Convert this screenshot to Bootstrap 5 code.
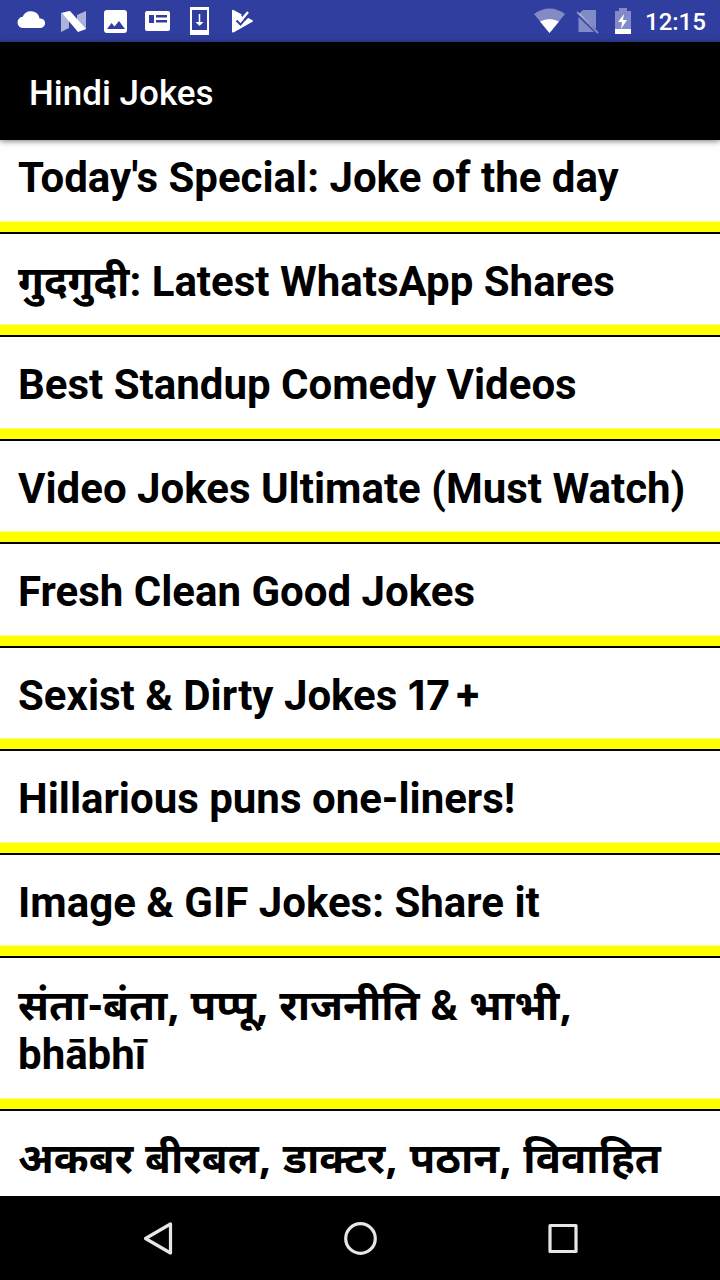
<!DOCTYPE html>
<html lang="hi">
<head>
<meta charset="utf-8">
<meta name="viewport" content="width=device-width, initial-scale=1">
<title>Hindi Jokes</title>
<link href="https://cdn.jsdelivr.net/npm/bootstrap@5.3.0/dist/css/bootstrap.min.css" rel="stylesheet">
<style>
body{height:1280px;font-family:Roboto,"Noto Sans Devanagari","Noto Sans",sans-serif;background:#fff;color:#000}
.status-bar{height:42px;background:#303f9f}
.status-bar svg{display:block}
.clock{font-size:24px;font-weight:500;line-height:44px;height:42px;width:63px}
.app-bar{height:98px;padding-left:29px;box-shadow:0 1px 6px rgba(0,0,0,.55);z-index:1}
.app-title{font-size:35px;font-weight:500;line-height:40px;padding-top:6px}
.jokes{min-height:0}
.jokes .list-group-item{flex:none;height:103.43px;padding:23px 18px 0;border:0;border-bottom:2px solid #000;box-shadow:inset 0 -10.5px #ff0;color:#000;font-size:42px;line-height:49px;font-weight:700;white-space:nowrap}
.jokes .list-group-item:first-child{height:94px;padding-top:13px}
.jokes .two-line{height:153px}
.jokes .hindi{font-family:"Noto Sans Devanagari","Noto Sans",sans-serif;line-height:40px}
.amp{font-family:Roboto,sans-serif}
.num{font-family:Inter,sans-serif;font-size:41px;line-height:1;letter-spacing:.5px;margin-right:6px}
.nav-keys{height:84px}
</style>
</head>
<body class="d-flex flex-column overflow-hidden">
<header class="status-bar flex-shrink-0">
<div class="d-flex">
<svg width="645" height="42" viewBox="0 0 645 42" fill="#fff" class="flex-shrink-0">
<path d="M23.500 28a5.600 5.600 0 0 1-.8-11.200A8.800 8.800 0 0 1 39.500 18.500 4.800 4.800 0 0 1 41 28z"/>
<path d="M61 13l8-2v17l-8 4zM77 15l9-4v18l-9 2z" opacity=".6"/><path d="M62 13l8-2 16 18-8 3z"/>
<path fill-rule="evenodd" d="M107 10h17a3 3 0 0 1 3 3v17a3 3 0 0 1-3 3h-17a3 3 0 0 1-3-3V13a3 3 0 0 1 3-3zm0 19h18l-6-8-4.500 5.500-3-3.500z"/>
<path fill-rule="evenodd" d="M147 11h21a2 2 0 0 1 2 2v16a2 2 0 0 1-2 2h-21a2 2 0 0 1-2-2V13a2 2 0 0 1 2-2zm2 4v8h5v-8zm7 0v2.500h11V15zm0 5v2.500h11V20z"/>
<path fill-rule="evenodd" d="M190 7h19v28h-19zm2 3v20h15V10z"/><path d="M199.500 14v10" fill="none" stroke="#fff" stroke-width="1.500"/><path d="M195.500 22h8l-4 4z"/>
<path d="M233.500 10l18.500 10q2 1 0 2l-18.500 10.500q-1.500.4-1.500-1V11q0-1.800 1.500-1z"/><path d="M236.500 20.500l4 4 8.500-10" fill="none" stroke="#303f9f" stroke-width="2"/><path d="M241 15l9-5v6l-5 5z" fill="#303f9f"/><path d="M237 16.500l3.500 4.500 7.500-9" fill="none" stroke="#fff" stroke-width="2.400"/>
<path d="M534 14q15.500-11 31 0l-15.500 19z" opacity=".4"/><path d="M540 21.500q9.500-5 19 0L549.500 33z"/>
<path d="M583 10h13v19l-17.500-15zM578.500 17L594 32h-15.500z" opacity=".4"/><path d="M577 12l21 21" stroke="#fff" stroke-width="1.800" opacity=".4"/>
<path d="M615 11h4V8h8v3h4v19h-16z" opacity=".4"/><path d="M615 29h16v5h-16zM624 14l-6 8h4l-1 7 6-9h-4z"/>
</svg>
<div class="clock text-white text-nowrap flex-shrink-0">12:15</div>
</div>
</header>
<nav class="app-bar bg-black d-flex align-items-center flex-shrink-0 position-relative">
<h1 class="app-title text-white mb-0">Hindi Jokes</h1>
</nav>
<main class="jokes list-group list-group-flush flex-grow-1 overflow-hidden">
<div class="list-group-item">Today's Special: Joke of the day</div>
<div class="list-group-item">गुदगुदी: Latest WhatsApp Shares</div>
<div class="list-group-item">Best Standup Comedy Videos</div>
<div class="list-group-item">Video Jokes Ultimate (Must Watch)</div>
<div class="list-group-item">Fresh Clean Good Jokes</div>
<div class="list-group-item">Sexist &amp; Dirty Jokes <span class="num">17</span>+</div>
<div class="list-group-item">Hillarious puns one-liners!</div>
<div class="list-group-item">Image &amp; GIF Jokes: Share it</div>
<div class="list-group-item two-line"><span class="hindi">संता-बंता, पप्पू, राजनीति <span class="amp">&amp;</span> भाभी,</span><br>bhābhī</div>
<div class="list-group-item"><span class="hindi" style="word-spacing:.9px">अकबर बीरबल, डाक्टर, पठान, विवाहित</span></div>
</main>
<footer class="nav-keys bg-black flex-shrink-0">
<svg width="720" height="84" viewBox="0 0 720 84" fill="none" stroke="#e6e6e6" stroke-width="3.200" stroke-linejoin="round" class="d-block">
<path d="M145.500 42.500L170.500 28v29z"/><circle cx="360.500" cy="42.500" r="14.800"/><rect x="550" y="29.500" width="26" height="26"/>
</svg>
</footer>
<script src="https://cdn.jsdelivr.net/npm/bootstrap@5.3.0/dist/js/bootstrap.bundle.min.js"></script>
</body>
</html>
